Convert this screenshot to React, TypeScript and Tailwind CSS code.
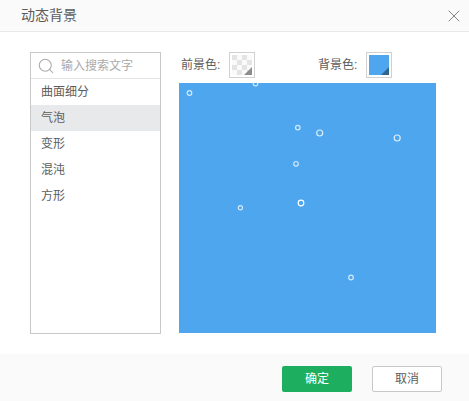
import { Search, X } from "lucide-react"

const items = ["曲面细分", "气泡", "变形", "混沌", "方形"]

// 相对画布左上角 (179, 83)
const bubbles = [
  { x: 10.5, y: 10, r: 2.3, o: 0.75 },
  { x: 76.5, y: 0.5, r: 2.3, o: 0.75 },
  { x: 118.8, y: 44.6, r: 2.3, o: 0.75 },
  { x: 140.7, y: 50, r: 3, o: 0.8 },
  { x: 218.2, y: 55, r: 3, o: 0.8 },
  { x: 117, y: 80.8, r: 2.3, o: 0.75 },
  { x: 122, y: 120, r: 2.8, o: 1 },
  { x: 61.4, y: 124.7, r: 2.1, o: 0.75 },
  { x: 172, y: 194.5, r: 2.3, o: 0.75 },
]

function Corner({ color }: { color: string }) {
  return (
    <svg className="absolute right-0 bottom-0" width="8" height="8" viewBox="0 0 8 8">
      <path d="M8 0V8H0Z" fill={color} />
    </svg>
  )
}

export default function App() {
  return (
    <div
      className="flex h-[401px] w-[469px] flex-col bg-white text-[#5c5c5c]"
      style={{ fontFamily: '"Liberation Sans", "Noto Sans CJK SC", sans-serif' }}
    >
      <div className="flex h-8 shrink-0 items-center justify-between border-b border-[#e8e8e8] bg-[#fafafa] pr-[5px] pl-[21px]">
        <h1 className="text-[14px] font-normal">动态背景</h1>
        <X className="h-5 w-5 text-[#777]" strokeWidth={1.1} />
      </div>

      <div className="flex flex-1 gap-[18px] pt-5 pl-[30px]">
        <div className="h-[282px] w-[131px] border border-[#c8c8c8] text-[12px]">
          <div className="flex h-[26px] items-center gap-[6px] border-b border-[#e4e4e4] pl-[6px]">
            <Search className="h-[18px] w-[18px] text-[#aaa]" strokeWidth={1.4} />
            <span className="text-[#aaa]">输入搜索文字</span>
          </div>
          {items.map((item) => (
            <div
              key={item}
              className={`flex h-[26px] items-center pl-[10px] ${item === "气泡" ? "bg-[#e8e9ea]" : ""}`}
            >
              {item}
            </div>
          ))}
        </div>

        <div className="w-[257px]">
          <div className="flex h-[31px] items-start pl-[2px] text-[12px]">
            <div className="flex w-[137px] items-center gap-[9px]">
              <span>前景色:</span>
              <div className="h-[26px] w-[26px] border border-[#d0d0d0] p-[2px]">
                <div className="relative grid h-full w-full grid-cols-4 grid-rows-4 bg-[#f4f4f4]">
                  {Array.from({ length: 16 }).map((_, i) => (
                    <div key={i} className={(i + (i >> 2)) % 2 === 0 ? "bg-[#e4e4e4]" : "bg-[#fafafa]"} />
                  ))}
                  <Corner color="#8c8c8c" />
                </div>
              </div>
            </div>
            <div className="flex items-center gap-[9px]">
              <span>背景色:</span>
              <div className="h-[26px] w-[26px] border border-[#d0d0d0] p-[2px]">
                <div className="relative h-full w-full bg-[#4da6ee]">
                  <Corner color="#2f668f" />
                </div>
              </div>
            </div>
          </div>

          <div className="h-[250px] w-[257px] bg-[#4da6ee]">
            <svg width="257" height="250" viewBox="0 0 257 250">
              {bubbles.map((b, i) => (
                <circle key={i} cx={b.x} cy={b.y} r={b.r} fill="none" stroke="#fff" strokeOpacity={b.o} strokeWidth="1.2" />
              ))}
            </svg>
          </div>
        </div>
      </div>

      <div className="flex h-[47px] shrink-0 items-start justify-end gap-5 bg-[#fafafa] pt-3 pr-[27px] text-[12px]">
        <button className="h-[26px] w-[70px] rounded-[2px] bg-[#1daf5f] text-white">确定</button>
        <button className="h-[26px] w-[70px] rounded-[2px] border border-[#c8c8c8] bg-white text-[#5c5c5c]">取消</button>
      </div>
    </div>
  )
}
